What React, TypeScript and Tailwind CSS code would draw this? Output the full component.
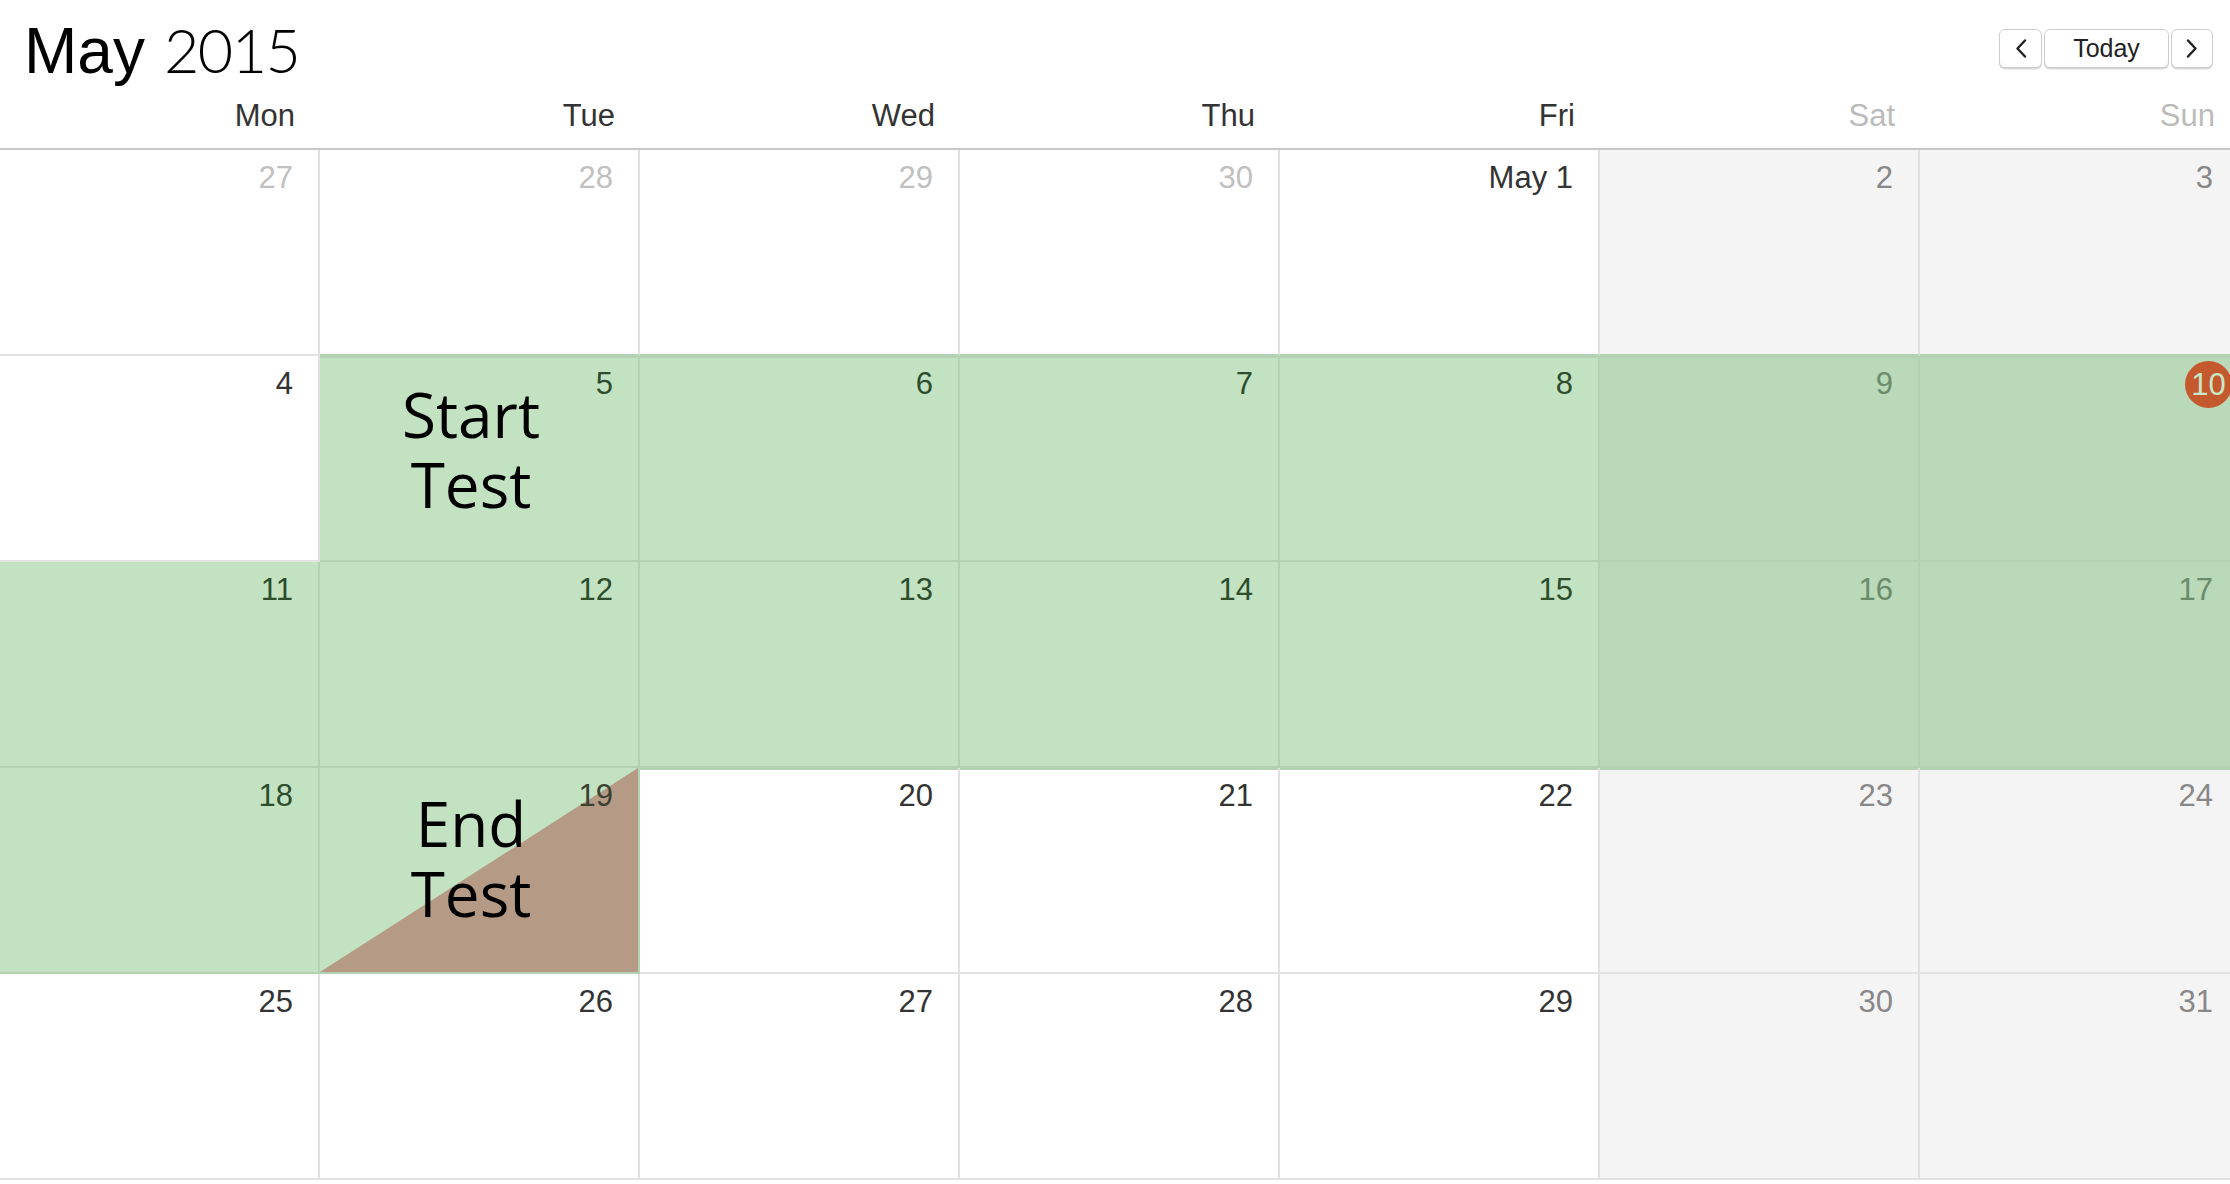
import React from "react";

type Cell = {
  label: string;
  other?: boolean;
  weekend: boolean;
  green?: boolean;
  topGreenShadow?: boolean;
  bottomGreen?: boolean;
  today?: boolean;
  start?: boolean;
  end?: boolean;
};

const days = ["Mon", "Tue", "Wed", "Thu", "Fri", "Sat", "Sun"];

function buildCells(): Cell[] {
  const cells: Cell[] = [];
  const labels = [
    ["27", "28", "29", "30", "May 1", "2", "3"],
    ["4", "5", "6", "7", "8", "9", "10"],
    ["11", "12", "13", "14", "15", "16", "17"],
    ["18", "19", "20", "21", "22", "23", "24"],
    ["25", "26", "27", "28", "29", "30", "31"],
  ];
  labels.forEach((row, r) => {
    row.forEach((label, c) => {
      const weekend = c >= 5;
      const green =
        (r === 1 && c >= 1) || r === 2 || (r === 3 && c <= 1);
      cells.push({
        label,
        weekend,
        other: r === 0 && c <= 3,
        green,
        topGreenShadow: (r === 1 && c >= 1) || (r === 3 && c >= 2),
        bottomGreen: r === 0 && c >= 1,
        today: r === 1 && c === 6,
        start: r === 1 && c === 1,
        end: r === 3 && c === 1,
      });
    });
  });
  return cells;
}

function DayCell({ cell }: { cell: Cell }) {
  let bg = cell.weekend ? "bg-[#f4f4f4]" : "bg-white";
  if (cell.green) bg = cell.weekend ? "bg-[#b9d9b9]" : "bg-[#c2e2c2]";

  let color = "text-[#333333]";
  if (cell.other) color = "text-[#c0c0c0]";
  else if (cell.green) color = cell.weekend ? "text-[#6b8b6b]" : "text-[#2d4d2d]";
  else if (cell.weekend) color = "text-[#888888]";

  const borderR = cell.green ? "border-r-[#b2d2b2]" : "border-r-[#e0e0e0]";
  const borderB = cell.green || cell.bottomGreen ? "border-b-[#b2d2b2]" : "border-b-[#e2e2e2]";
  const shadow = cell.topGreenShadow ? "shadow-[inset_0_2px_0_#b2d2b2]" : "";

  return (
    <div
      className={`relative h-[206px] border-r-2 border-b-2 ${borderR} ${borderB} ${bg} ${shadow} pr-[25px] pt-[9px] text-right`}
    >
      {cell.end && (
        <svg
          className="absolute inset-0 h-full w-full"
          viewBox="0 0 100 100"
          preserveAspectRatio="none"
        >
          <polygon points="0,100 100,0 100,100" fill="#b59a85" />
        </svg>
      )}
      {cell.today ? (
        <div className="absolute right-[6px] top-[5px] flex h-[47px] w-[47px] items-center justify-center rounded-full bg-[#c3592d] font-['Liberation_Sans',Arial,sans-serif] text-[31px] leading-[36px] text-[#c8e6c8]">
          10
        </div>
      ) : (
        <span
          className={`relative font-['Liberation_Sans',Arial,sans-serif] text-[31px] leading-[38px] ${
            cell.end ? "text-[#3b4030]" : color
          }`}
        >
          {cell.label}
        </span>
      )}
      {cell.start && (
        <div className="absolute left-0 right-[16px] top-[23px] text-center font-['Open_Sans',sans-serif] text-[62px] leading-[70px] text-black">
          Start
          <br />
          Test
        </div>
      )}
      {cell.end && (
        <div className="absolute left-0 right-[16px] top-[20px] text-center font-['Open_Sans',sans-serif] text-[62px] leading-[70px] text-black">
          End
          <br />
          Test
        </div>
      )}
    </div>
  );
}

function NavButton({ children, w }: { children: React.ReactNode; w: string }) {
  return (
    <div
      className={`flex h-[39px] ${w} items-center justify-center rounded-[6px] border-[1.5px] border-[#cdcdcd] bg-white shadow-[0_1.5px_0_#d8d8d8]`}
    >
      {children}
    </div>
  );
}

export default function App() {
  const cells = buildCells();
  return (
    <div className="h-[1184px] w-[2230px] overflow-hidden bg-white">
      <div className="w-[2240px]">
        <div className="flex h-[96px] items-start justify-between">
          <div className="flex items-baseline whitespace-nowrap pl-[24px] pt-[18px] text-[64px] leading-[64px] text-black">
            <span className="font-['Liberation_Sans',Arial,sans-serif]">May</span>
            <span className="ml-[19px] font-['Lato',sans-serif] font-light text-[61px] tracking-[-1.5px]">
              2015
            </span>
          </div>
          <div className="flex gap-[2px] pr-[27px] pt-[29px]">
            <NavButton w="w-[43px]">
              <svg width="12" height="19" viewBox="0 0 12 19" fill="none">
                <polyline
                  points="10,1.5 2.5,9.5 10,17.5"
                  stroke="#222"
                  strokeWidth="2.4"
                  strokeLinecap="round"
                  strokeLinejoin="round"
                />
              </svg>
            </NavButton>
            <NavButton w="w-[125px]">
              <span className="font-['Liberation_Sans',Arial,sans-serif] text-[25px] leading-none text-[#222]">
                Today
              </span>
            </NavButton>
            <NavButton w="w-[42px]">
              <svg width="12" height="19" viewBox="0 0 12 19" fill="none">
                <polyline
                  points="2,1.5 9.5,9.5 2,17.5"
                  stroke="#222"
                  strokeWidth="2.4"
                  strokeLinecap="round"
                  strokeLinejoin="round"
                />
              </svg>
            </NavButton>
          </div>
        </div>
        <div className="grid h-[54px] grid-cols-[repeat(7,320px)] border-b-2 border-b-[#c8c8c8]">
          {days.map((d, i) => (
            <div
              key={d}
              className={`pr-[25px] text-right font-['Liberation_Sans',Arial,sans-serif] text-[31px] leading-[40px] ${
                i >= 5 ? "text-[#bbbbbb]" : "text-[#333333]"
              }`}
            >
              {d}
            </div>
          ))}
        </div>
        <div className="grid grid-cols-[repeat(7,320px)]">
          {cells.map((c, i) => (
            <DayCell key={i} cell={c} />
          ))}
        </div>
      </div>
    </div>
  );
}
